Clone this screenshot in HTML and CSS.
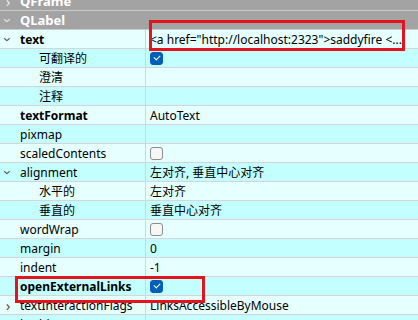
FILE: index.html
```html
<!DOCTYPE html>
<html lang="zh-CN">
<head>
  <meta charset="UTF-8" />
  <title>QLabel 属性</title>
  <link rel="stylesheet" href="styles.css">
</head>
<body>

<div class="editor">
  <div class="props">
    <!-- class groups -->
    <div class="row group"><span class="arrow">&#8250;</span><span class="name">QFrame</span></div>
    <div class="row group"><span class="arrow down">&#8250;</span><span class="name">QLabel</span></div>

    <!-- QLabel properties -->
    <div class="row light">
      <div class="key bold"><span class="arrow dark down">&#8250;</span>text</div>
      <div class="val">&lt;a href="http://localhost:2323"&gt;saddyfire &lt;...</div>
    </div>
    <div class="row dark">
      <div class="key sub">可翻译的</div>
      <div class="val"><span class="check on"></span></div>
    </div>
    <div class="row light">
      <div class="key sub">澄清</div>
      <div class="val"></div>
    </div>
    <div class="row dark">
      <div class="key sub">注释</div>
      <div class="val"></div>
    </div>
    <div class="row light">
      <div class="key bold">textFormat</div>
      <div class="val">AutoText</div>
    </div>
    <div class="row dark">
      <div class="key">pixmap</div>
      <div class="val"></div>
    </div>
    <div class="row light">
      <div class="key">scaledContents</div>
      <div class="val"><span class="check"></span></div>
    </div>
    <div class="row dark">
      <div class="key"><span class="arrow dark down">&#8250;</span>alignment</div>
      <div class="val">左对齐, 垂直中心对齐</div>
    </div>
    <div class="row light">
      <div class="key sub">水平的</div>
      <div class="val">左对齐</div>
    </div>
    <div class="row dark">
      <div class="key sub">垂直的</div>
      <div class="val">垂直中心对齐</div>
    </div>
    <div class="row light">
      <div class="key">wordWrap</div>
      <div class="val"><span class="check"></span></div>
    </div>
    <div class="row dark">
      <div class="key">margin</div>
      <div class="val">0</div>
    </div>
    <div class="row light">
      <div class="key">indent</div>
      <div class="val">-1</div>
    </div>
    <div class="row dark">
      <div class="key bold">openExternalLinks</div>
      <div class="val"><span class="check on"></span></div>
    </div>
    <div class="row light">
      <div class="key"><span class="arrow dark">&#8250;</span>textInteractionFlags</div>
      <div class="val">LinksAccessibleByMouse</div>
    </div>
    <div class="row dark">
      <div class="key">buddy</div>
      <div class="val"></div>
    </div>
  </div>

  <!-- red annotation boxes -->
  <div class="mark mark-text"></div>
  <div class="mark mark-links"></div>
</div>

</body>
</html>
```

FILE: styles.css
```css
body {
  margin: 0;
  background-color: #ffffff;
  font-family: "Noto Sans", "Noto Sans CJK SC", sans-serif;
  font-size: 12px;
  color: #000;
  overflow: hidden;
}

.editor {
  position: relative;
  width: 418px;
  height: 320px;
  overflow: hidden;
}

.props {
  margin-top: -8px;
}

/* one property row */
.row {
  display: flex;
  height: 18px;
  line-height: 19px;
  border-bottom: 1px solid #d6d6d6;
  white-space: nowrap;
}
.row.light {
  background-color: #e6ffff;
}
.row.dark {
  background-color: #c4ffff;
}

/* class header rows (gray) */
.row.group {
  background-color: #a3a3a3;
  border-bottom-color: #c9c9c9;
  color: #ffffff;
  font-weight: bold;
  font-size: 13px;
  padding-left: 20px;
  position: relative;
}
.row.group .arrow {
  color: #e8e8e8;
}

.key {
  box-sizing: border-box;
  width: 146px;
  padding-left: 20px;
  border-right: 1px solid #d6d6d6;
  position: relative;
  flex-shrink: 0;
  overflow: hidden;
}
.key.bold {
  font-weight: bold;
}
.key.sub {
  padding-left: 39px;
}

.val {
  flex: 1;
  padding-left: 4px;
  overflow: hidden;
  display: flex;
  align-items: center;
}

/* expand / collapse chevrons */
.arrow {
  position: absolute;
  left: 4px;
  top: 0;
  width: 8px;
  text-align: center;
  font-size: 15px;
  font-weight: normal;
  color: #8a8a8a;
}
.arrow.dark {
  color: #555;
}
.arrow.down {
  transform: rotate(90deg);
}

/* checkboxes */
.check {
  display: inline-block;
  box-sizing: border-box;
  width: 13px;
  height: 13px;
  border: 1px solid #8c8c8c;
  border-radius: 3px;
  background-color: #f6f6f6;
  position: relative;
}
.check.on {
  background-color: #005fb8;
  border-color: #005fb8;
}
.check.on::after {
  content: "";
  position: absolute;
  left: 3px;
  top: 2px;
  width: 5px;
  height: 3px;
  border-left: 1px solid #fff;
  border-bottom: 1px solid #fff;
  transform: rotate(-45deg);
}

/* annotation boxes drawn over the table */
.mark {
  position: absolute;
  box-sizing: border-box;
  border: 3px solid #e3141e;
}
.mark-text {
  left: 149px;
  top: 20px;
  width: 256px;
  height: 31px;
}
.mark-links {
  left: 15px;
  top: 276px;
  width: 190px;
  height: 27px;
}
```
